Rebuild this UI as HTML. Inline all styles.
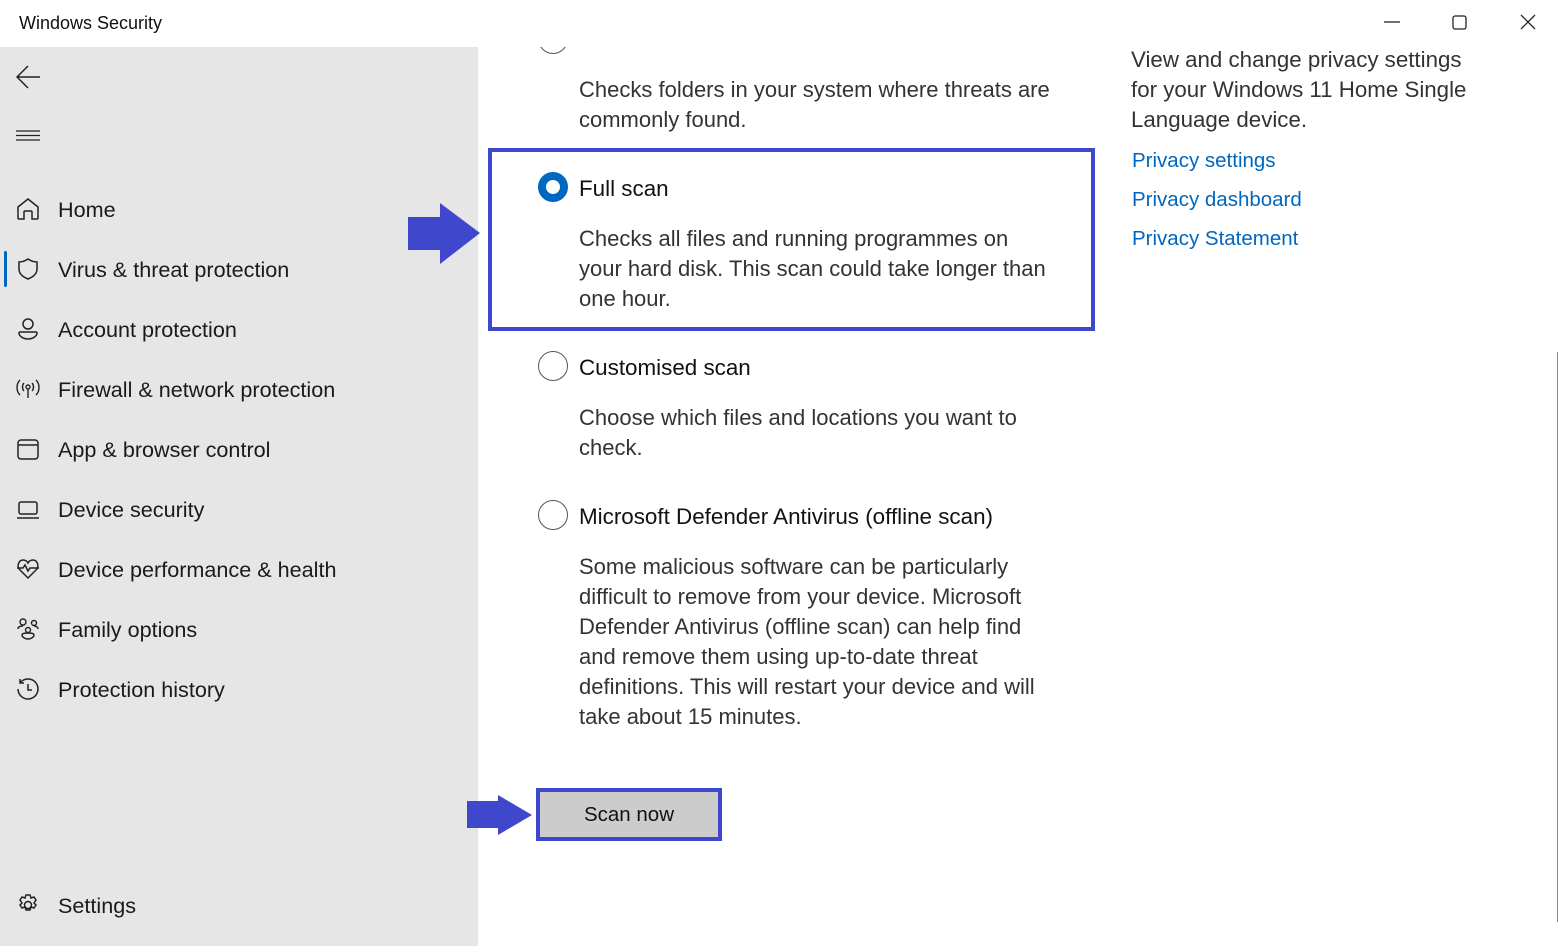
<!DOCTYPE html>
<html><head><meta charset="utf-8"><style>
*{margin:0;padding:0;box-sizing:border-box}
body{width:1560px;height:946px;overflow:hidden;background:#fff;font-family:"Liberation Sans",sans-serif;color:#1a1a1a;position:relative}
.a{position:absolute;white-space:nowrap}
#side{position:absolute;left:0;top:47px;width:478px;height:899px;background:#e6e6e6}
.nav{position:absolute;left:58px;font-size:21.6px;color:#1a1a1a;white-space:nowrap;margin-top:-2px}
.ic{position:absolute;left:16px}
.t{font-size:22px;color:#333;line-height:30px;position:absolute;left:579px;white-space:nowrap}
.h{font-size:22.4px;color:#111;position:absolute;left:579px;white-space:nowrap}
.r{position:absolute;left:538px;width:30px;height:30px;border-radius:50%;border:1.5px solid #555;background:#fff}
.lk{position:absolute;left:1132px;font-size:20.5px;color:#0067c0;white-space:nowrap}
</style></head><body>
<div class="a" style="left:19px;top:13px;font-size:18px;color:#111">Windows Security</div>
<svg class="a" style="left:1380px;top:10px" width="160" height="26" viewBox="0 0 160 26" fill="none" stroke="#222" stroke-width="1.3"><path d="M4 12h16"/><rect x="73" y="6" width="13" height="13" rx="2"/><path d="M141 5l14 14M155 5l-14 14"/></svg>
<div id="side"></div>
<svg class="a" style="left:16px;top:64px" width="26" height="26" viewBox="0 0 26 26" fill="none" stroke="#222" stroke-width="1.5"><path d="M1 13h23M12 2L1 13l11 11"/></svg>
<svg class="a" style="left:16px;top:128px" width="26" height="16" fill="none" stroke="#222" stroke-width="1.2"><path d="M0 3h24M0 7.5h24M0 12h24"/></svg>
<div style="position:absolute;left:4px;top:251px;width:3px;height:36px;background:#0067c0;border-radius:2px"></div>
<svg class="ic" style="top:197px" width="24" height="24" viewBox="0 0 24 24" fill="none" stroke="#222" stroke-width="1.5"><path d="M2 10L12 2l10 8v11a1 1 0 0 1-1 1h-5v-7a1 1 0 0 0-1-1h-6a1 1 0 0 0-1 1v7H3a1 1 0 0 1-1-1z"/></svg>
<div class="nav" style="top:199px">Home</div>
<svg class="ic" style="top:257px" width="24" height="24" viewBox="0 0 24 24" fill="none" stroke="#222" stroke-width="1.5"><path d="M12 2c3 2 6 3 9 3v7c0 5-4 8-9 10-5-2-9-5-9-10V5c3 0 6-1 9-3z"/></svg>
<div class="nav" style="top:259px">Virus &amp; threat protection</div>
<svg class="ic" style="top:317px" width="24" height="24" viewBox="0 0 24 24" fill="none" stroke="#222" stroke-width="1.5"><circle cx="12" cy="7" r="5"/><path d="M4 15h16a1 1 0 0 1 1 1c0 3-4 6-9 6s-9-3-9-6a1 1 0 0 1 1-1z"/></svg>
<div class="nav" style="top:319px">Account protection</div>
<svg class="ic" style="top:377px" width="24" height="24" viewBox="0 0 24 24" fill="none" stroke="#222" stroke-width="1.4"><circle cx="12" cy="10" r="2"/><path d="M12 12v9M8 6c-2 2-2 6 0 8M16 6c2 2 2 6 0 8M4 3c-4 4-4 11 0 15M20 3c4 4 4 11 0 15"/></svg>
<div class="nav" style="top:379px">Firewall &amp; network protection</div>
<svg class="ic" style="top:437px" width="24" height="24" viewBox="0 0 24 24" fill="none" stroke="#222" stroke-width="1.5"><rect x="2" y="3" width="20" height="19" rx="3"/><path d="M2 8h20"/></svg>
<div class="nav" style="top:439px">App &amp; browser control</div>
<svg class="ic" style="top:497px" width="24" height="24" viewBox="0 0 24 24" fill="none" stroke="#222" stroke-width="1.5"><rect x="3" y="5" width="18" height="12" rx="2"/><path d="M1 21h22"/></svg>
<div class="nav" style="top:499px">Device security</div>
<svg class="ic" style="top:557px" width="24" height="24" viewBox="0 0 24 24" fill="none" stroke="#222" stroke-width="1.5"><path d="M12 21L4 13C0 9 3 3 7 3c2 0 4 1 5 3 1-2 3-3 5-3 4 0 7 6 3 10z"/><path d="M1 11h6l2-3 3 6 2-3h9"/></svg>
<div class="nav" style="top:559px">Device performance &amp; health</div>
<svg class="ic" style="top:617px" width="24" height="24" viewBox="0 0 24 24" fill="none" stroke="#222" stroke-width="1.4"><circle cx="7" cy="5" r="3"/><circle cx="18" cy="6" r="2.5"/><circle cx="12" cy="13" r="2.5"/><path d="M2 12c0-2 2-3 5-3M22 12c0-2-2-3-4-3M6 18c0-2 3-2 6-2s6 0 6 2c0 2-3 4-6 4s-6-2-6-4z"/></svg>
<div class="nav" style="top:619px">Family options</div>
<svg class="ic" style="top:677px" width="24" height="24" viewBox="0 0 24 24" fill="none" stroke="#222" stroke-width="1.5"><path d="M4 6a10 10 0 1 1-2 6M4 2v4h4"/><path d="M12 7v6h4"/></svg>
<div class="nav" style="top:679px">Protection history</div>
<svg class="ic" style="top:893px" width="24" height="24" viewBox="0 0 24 24" fill="none" stroke="#222" stroke-width="1.5"><circle cx="12" cy="12" r="3.5"/><path d="M10 2h4l1 3 3-1 2 3-2 3 2 2-2 3-3-1-1 3h-4l-1-3-3 1-2-3 2-2-2-3 2-3 3 1z"/></svg>
<div class="nav" style="top:895px">Settings</div>

<svg class="a" style="left:408px;top:202px" width="74" height="62"><path d="M0 15h32V1l40 30-40 31V48H0z" fill="#3f48cc"/></svg>
<svg class="a" style="left:467px;top:794px" width="68" height="42"><path d="M0 7h31V1l34 20-34 20v-7H0z" fill="#3f48cc"/></svg>

<div class="r" style="top:24px"></div>
<div style="position:absolute;left:530px;top:0;width:80px;height:47px;background:#fff"></div>
<div class="t" style="top:75px">Checks folders in your system where threats are<br>commonly found.</div>
<div style="position:absolute;left:488px;top:148px;width:607px;height:183px;border:4px solid #3f48cc"></div>
<div class="r" style="top:172px;border:8px solid #0067c0"></div>
<div class="h" style="top:176px">Full scan</div>
<div class="t" style="top:224px">Checks all files and running programmes on<br>your hard disk. This scan could take longer than<br>one hour.</div>
<div class="r" style="top:351px"></div>
<div class="h" style="top:355px">Customised scan</div>
<div class="t" style="top:403px">Choose which files and locations you want to<br>check.</div>
<div class="r" style="top:500px"></div>
<div class="h" style="top:504px">Microsoft Defender Antivirus (offline scan)</div>
<div class="t" style="top:552px">Some malicious software can be particularly<br>difficult to remove from your device. Microsoft<br>Defender Antivirus (offline scan) can help find<br>and remove them using up-to-date threat<br>definitions. This will restart your device and will<br>take about 15 minutes.</div>
<div style="position:absolute;left:536px;top:788px;width:186px;height:53px;border:4px solid #3f48cc;background:#ccc;font-size:20.5px;text-align:center;line-height:45px;color:#111">Scan now</div>

<div class="a" style="left:1131px;top:45px;font-size:22.3px;line-height:30px;color:#333">View and change privacy settings<br>for your Windows 11 Home Single<br>Language device.</div>
<div class="lk" style="top:149px">Privacy settings</div>
<div class="lk" style="top:188px">Privacy dashboard</div>
<div class="lk" style="top:227px">Privacy Statement</div>
<div style="position:absolute;left:1557px;top:352px;width:1px;height:570px;background:#888"></div>
</body></html>
